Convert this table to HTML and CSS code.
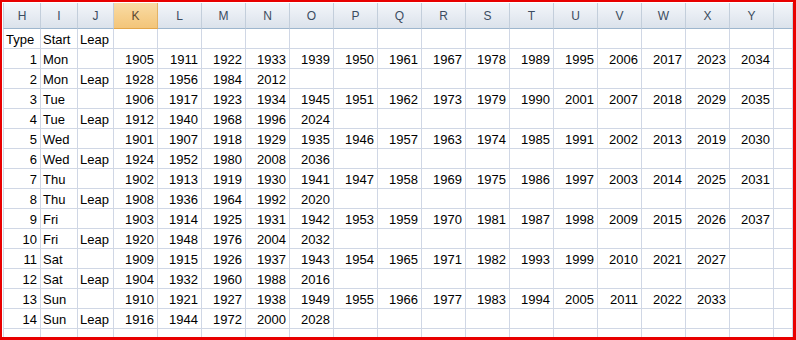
FILE: index.html
```html
<!DOCTYPE html>
<html>
<head>
<meta charset="utf-8">
<link rel="stylesheet" href="styles.css">
</head>
<body>
<div class="frame">
  <div class="sheet">
    <div class="row head">
      <div class="c">H</div><div class="c">I</div><div class="c">J</div><div class="c sel">K</div><div class="c">L</div><div class="c">M</div><div class="c">N</div><div class="c">O</div><div class="c">P</div><div class="c">Q</div><div class="c">R</div><div class="c">S</div><div class="c">T</div><div class="c">U</div><div class="c">V</div><div class="c">W</div><div class="c">X</div><div class="c">Y</div><div class="c"></div>
    </div>
    <div class="row">
      <div class="c t">Type</div><div class="c t">Start</div><div class="c t">Leap</div><div class="c"></div><div class="c"></div><div class="c"></div><div class="c"></div><div class="c"></div><div class="c"></div><div class="c"></div><div class="c"></div><div class="c"></div><div class="c"></div><div class="c"></div><div class="c"></div><div class="c"></div><div class="c"></div><div class="c"></div><div class="c"></div>
    </div>
    <div class="row">
      <div class="c">1</div><div class="c t">Mon</div><div class="c t"></div><div class="c">1905</div><div class="c">1911</div><div class="c">1922</div><div class="c">1933</div><div class="c">1939</div><div class="c">1950</div><div class="c">1961</div><div class="c">1967</div><div class="c">1978</div><div class="c">1989</div><div class="c">1995</div><div class="c">2006</div><div class="c">2017</div><div class="c">2023</div><div class="c">2034</div><div class="c"></div>
    </div>
    <div class="row">
      <div class="c">2</div><div class="c t">Mon</div><div class="c t">Leap</div><div class="c">1928</div><div class="c">1956</div><div class="c">1984</div><div class="c">2012</div><div class="c"></div><div class="c"></div><div class="c"></div><div class="c"></div><div class="c"></div><div class="c"></div><div class="c"></div><div class="c"></div><div class="c"></div><div class="c"></div><div class="c"></div><div class="c"></div>
    </div>
    <div class="row">
      <div class="c">3</div><div class="c t">Tue</div><div class="c t"></div><div class="c">1906</div><div class="c">1917</div><div class="c">1923</div><div class="c">1934</div><div class="c">1945</div><div class="c">1951</div><div class="c">1962</div><div class="c">1973</div><div class="c">1979</div><div class="c">1990</div><div class="c">2001</div><div class="c">2007</div><div class="c">2018</div><div class="c">2029</div><div class="c">2035</div><div class="c"></div>
    </div>
    <div class="row">
      <div class="c">4</div><div class="c t">Tue</div><div class="c t">Leap</div><div class="c">1912</div><div class="c">1940</div><div class="c">1968</div><div class="c">1996</div><div class="c">2024</div><div class="c"></div><div class="c"></div><div class="c"></div><div class="c"></div><div class="c"></div><div class="c"></div><div class="c"></div><div class="c"></div><div class="c"></div><div class="c"></div><div class="c"></div>
    </div>
    <div class="row">
      <div class="c">5</div><div class="c t">Wed</div><div class="c t"></div><div class="c">1901</div><div class="c">1907</div><div class="c">1918</div><div class="c">1929</div><div class="c">1935</div><div class="c">1946</div><div class="c">1957</div><div class="c">1963</div><div class="c">1974</div><div class="c">1985</div><div class="c">1991</div><div class="c">2002</div><div class="c">2013</div><div class="c">2019</div><div class="c">2030</div><div class="c"></div>
    </div>
    <div class="row">
      <div class="c">6</div><div class="c t">Wed</div><div class="c t">Leap</div><div class="c">1924</div><div class="c">1952</div><div class="c">1980</div><div class="c">2008</div><div class="c">2036</div><div class="c"></div><div class="c"></div><div class="c"></div><div class="c"></div><div class="c"></div><div class="c"></div><div class="c"></div><div class="c"></div><div class="c"></div><div class="c"></div><div class="c"></div>
    </div>
    <div class="row">
      <div class="c">7</div><div class="c t">Thu</div><div class="c t"></div><div class="c">1902</div><div class="c">1913</div><div class="c">1919</div><div class="c">1930</div><div class="c">1941</div><div class="c">1947</div><div class="c">1958</div><div class="c">1969</div><div class="c">1975</div><div class="c">1986</div><div class="c">1997</div><div class="c">2003</div><div class="c">2014</div><div class="c">2025</div><div class="c">2031</div><div class="c"></div>
    </div>
    <div class="row">
      <div class="c">8</div><div class="c t">Thu</div><div class="c t">Leap</div><div class="c">1908</div><div class="c">1936</div><div class="c">1964</div><div class="c">1992</div><div class="c">2020</div><div class="c"></div><div class="c"></div><div class="c"></div><div class="c"></div><div class="c"></div><div class="c"></div><div class="c"></div><div class="c"></div><div class="c"></div><div class="c"></div><div class="c"></div>
    </div>
    <div class="row">
      <div class="c">9</div><div class="c t">Fri</div><div class="c t"></div><div class="c">1903</div><div class="c">1914</div><div class="c">1925</div><div class="c">1931</div><div class="c">1942</div><div class="c">1953</div><div class="c">1959</div><div class="c">1970</div><div class="c">1981</div><div class="c">1987</div><div class="c">1998</div><div class="c">2009</div><div class="c">2015</div><div class="c">2026</div><div class="c">2037</div><div class="c"></div>
    </div>
    <div class="row">
      <div class="c">10</div><div class="c t">Fri</div><div class="c t">Leap</div><div class="c">1920</div><div class="c">1948</div><div class="c">1976</div><div class="c">2004</div><div class="c">2032</div><div class="c"></div><div class="c"></div><div class="c"></div><div class="c"></div><div class="c"></div><div class="c"></div><div class="c"></div><div class="c"></div><div class="c"></div><div class="c"></div><div class="c"></div>
    </div>
    <div class="row">
      <div class="c">11</div><div class="c t">Sat</div><div class="c t"></div><div class="c">1909</div><div class="c">1915</div><div class="c">1926</div><div class="c">1937</div><div class="c">1943</div><div class="c">1954</div><div class="c">1965</div><div class="c">1971</div><div class="c">1982</div><div class="c">1993</div><div class="c">1999</div><div class="c">2010</div><div class="c">2021</div><div class="c">2027</div><div class="c"></div><div class="c"></div>
    </div>
    <div class="row">
      <div class="c">12</div><div class="c t">Sat</div><div class="c t">Leap</div><div class="c">1904</div><div class="c">1932</div><div class="c">1960</div><div class="c">1988</div><div class="c">2016</div><div class="c"></div><div class="c"></div><div class="c"></div><div class="c"></div><div class="c"></div><div class="c"></div><div class="c"></div><div class="c"></div><div class="c"></div><div class="c"></div><div class="c"></div>
    </div>
    <div class="row">
      <div class="c">13</div><div class="c t">Sun</div><div class="c t"></div><div class="c">1910</div><div class="c">1921</div><div class="c">1927</div><div class="c">1938</div><div class="c">1949</div><div class="c">1955</div><div class="c">1966</div><div class="c">1977</div><div class="c">1983</div><div class="c">1994</div><div class="c">2005</div><div class="c">2011</div><div class="c">2022</div><div class="c">2033</div><div class="c"></div><div class="c"></div>
    </div>
    <div class="row">
      <div class="c">14</div><div class="c t">Sun</div><div class="c t">Leap</div><div class="c">1916</div><div class="c">1944</div><div class="c">1972</div><div class="c">2000</div><div class="c">2028</div><div class="c"></div><div class="c"></div><div class="c"></div><div class="c"></div><div class="c"></div><div class="c"></div><div class="c"></div><div class="c"></div><div class="c"></div><div class="c"></div><div class="c"></div>
    </div>
    <div class="row">
      <div class="c"></div><div class="c"></div><div class="c"></div><div class="c"></div><div class="c"></div><div class="c"></div><div class="c"></div><div class="c"></div><div class="c"></div><div class="c"></div><div class="c"></div><div class="c"></div><div class="c"></div><div class="c"></div><div class="c"></div><div class="c"></div><div class="c"></div><div class="c"></div><div class="c"></div>
    </div>
  </div>
</div>
</body>
</html>
```

FILE: styles.css
```css
html, body {
  margin: 0;
  padding: 0;
  background: #ffffff;
}

.frame {
  box-sizing: border-box;
  width: 796px;
  height: 340px;
  border-style: solid;
  border-color: #e80000;
  border-width: 2px 3px 3px 2px;
  padding: 1px 0 0 1px;
  background: #ffffff;
  overflow: hidden;
}

.sheet {
  font-family: "Liberation Sans", Arial, sans-serif;
  font-size: 13px;
  color: #000000;
}

.row {
  display: grid;
  grid-template-columns: 38px 37px 36px repeat(15, 44px) 1fr;
  height: 20px;
}

.c {
  box-sizing: border-box;
  height: 20px;
  border-right: 1px solid #d0d7e5;
  border-bottom: 1px solid #d0d7e5;
  padding: 2px 3px 0 2px;
  line-height: 17px;
  text-align: right;
  white-space: nowrap;
  overflow: hidden;
}

.row .c:first-child {
  border-left: 1px solid #d0d7e5;
}

.c.t {
  text-align: left;
}

.row.head {
  height: 26px;
}

.head .c {
  height: 26px;
  padding: 0;
  text-align: center;
  line-height: 26px;
  font-size: 12px;
  color: #3b4c60;
  background: linear-gradient(to bottom, #f3f6fa 0%, #e6ebf2 55%, #dbe2eb 100%);
  border-right: 1px solid #c3cedb;
  border-bottom: 1px solid #9eb6ce;
}

.head .c:first-child {
  border-left: 1px solid #c3cedb;
}

.head .c.sel {
  color: #5b4a2e;
  background: linear-gradient(to bottom, #f9dca6 0%, #f6cf8c 55%, #f3c57a 100%);
  border-right: 1px solid #e3b265;
  border-bottom: 1px solid #e3a64a;
}
```
